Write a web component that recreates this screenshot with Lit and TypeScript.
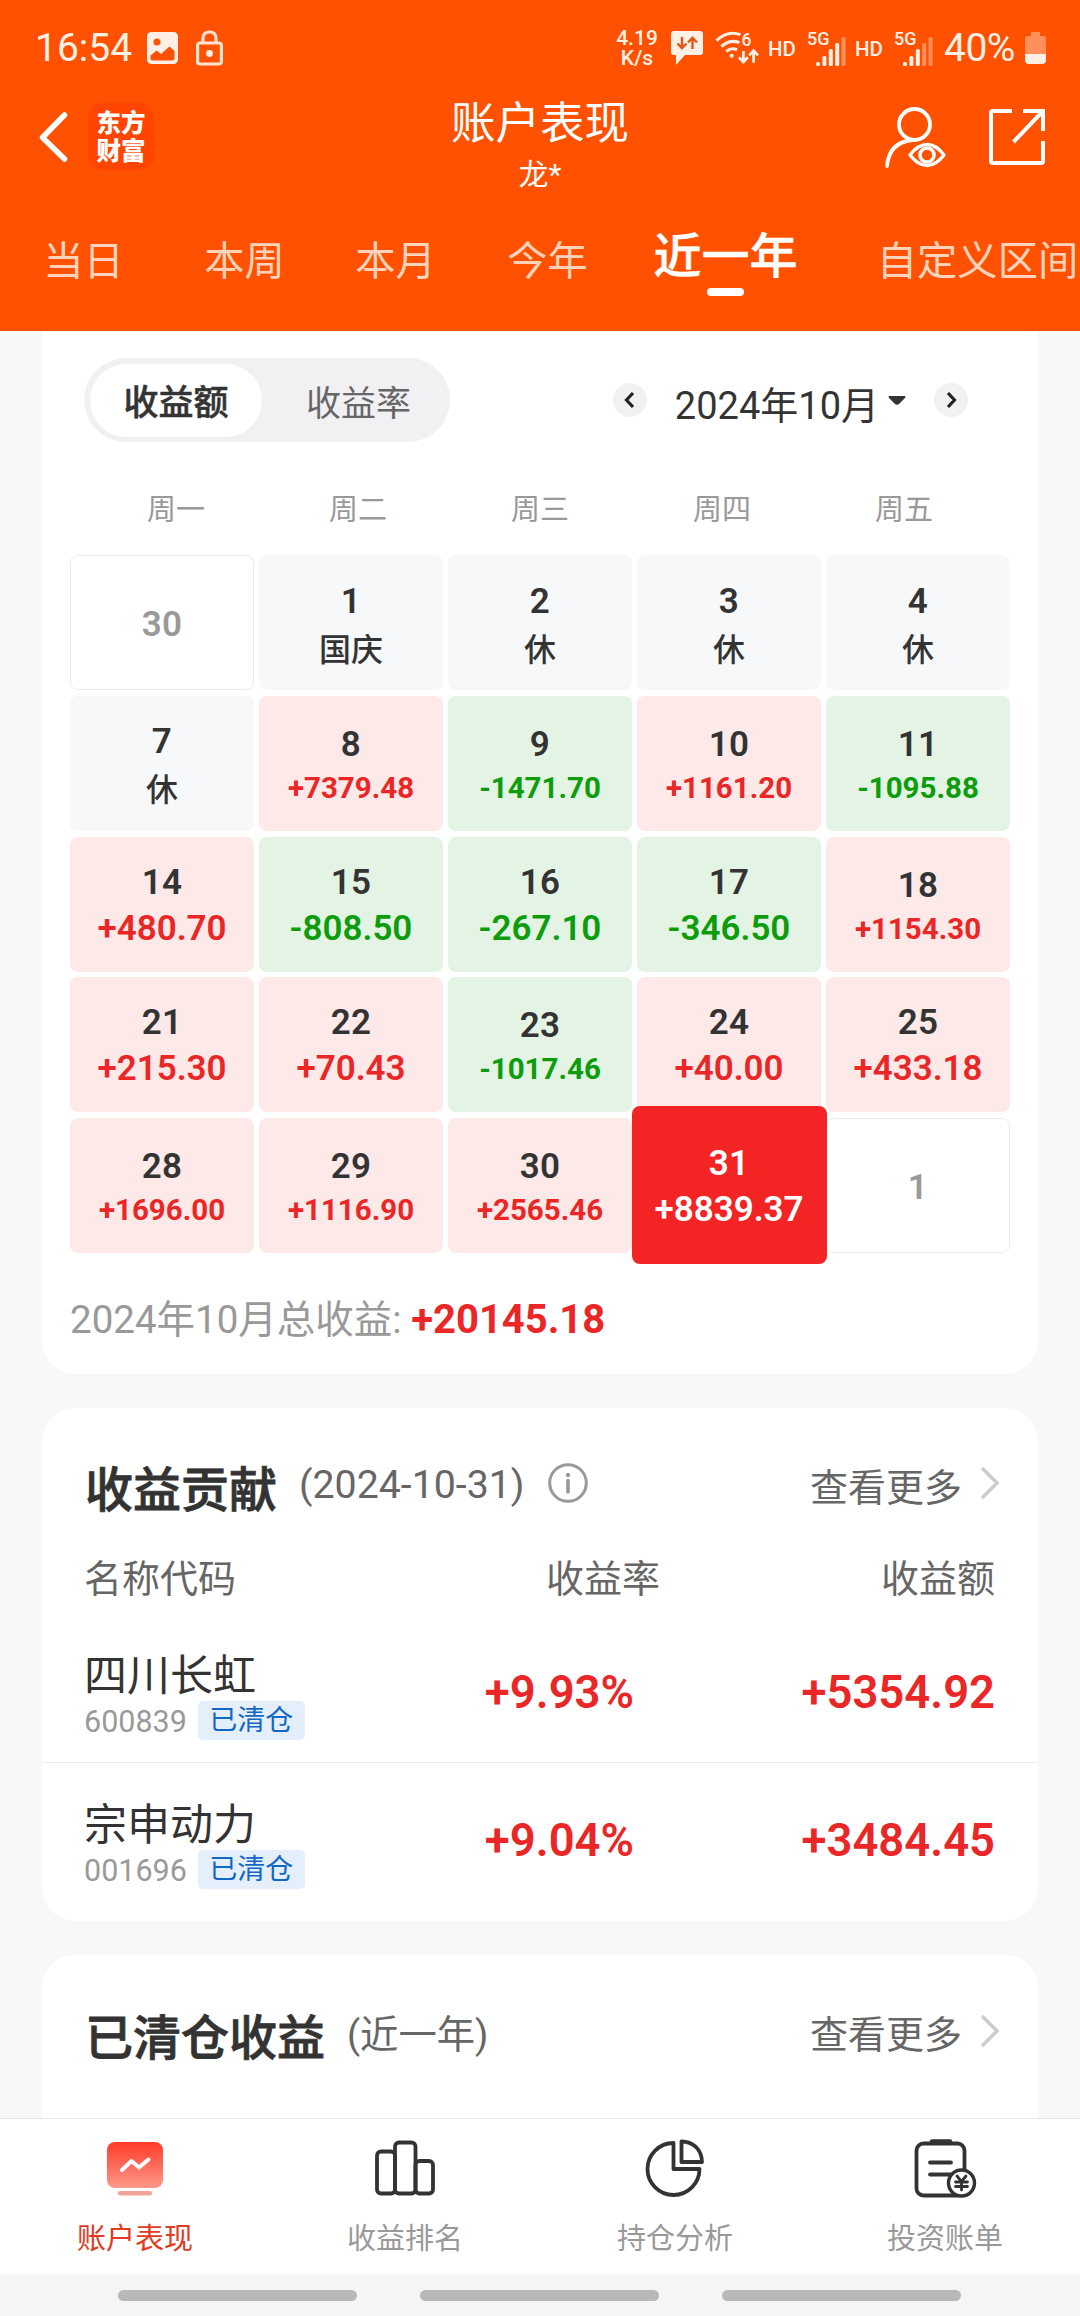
import { LitElement, html, css, svg, nothing } from "lit";
import { customElement } from "lit/decorators.js";
import { classMap } from "lit/directives/class-map.js";

type Kind = "outside" | "rest" | "up" | "down" | "selected";
interface Day { d: string; v?: string; k: Kind }

const day = (d: string, v?: string): Day => {
  if (!v) return { d, k: "outside" };
  if (v.startsWith("+")) return { d, v, k: "up" };
  if (v.startsWith("-")) return { d, v, k: "down" };
  return { d, v, k: "rest" };
};

const DAYS: Day[] = [
  day("30"), day("1", "国庆"), day("2", "休"), day("3", "休"), day("4", "休"),
  day("7", "休"), day("8", "+7379.48"), day("9", "-1471.70"), day("10", "+1161.20"), day("11", "-1095.88"),
  day("14", "+480.70"), day("15", "-808.50"), day("16", "-267.10"), day("17", "-346.50"), day("18", "+1154.30"),
  day("21", "+215.30"), day("22", "+70.43"), day("23", "-1017.46"), day("24", "+40.00"), day("25", "+433.18"),
  day("28", "+1696.00"), day("29", "+1116.90"), day("30", "+2565.46"),
  { d: "31", v: "+8839.37", k: "selected" }, day("1"),
];

const STOCKS = [
  { name: "四川长虹", code: "600839", rate: "+9.93%", amount: "+5354.92" },
  { name: "宗申动力", code: "001696", rate: "+9.04%", amount: "+3484.45" },
];

const bars = (lit: number) => svg`
  ${[0, 1, 2, 3, 4].map((i) => {
    const h = [4, 10, 17, 23, 29][i];
    return svg`<rect x=${i * 6.4} y=${30 - h} width="4" height=${h} rx="1.6" opacity=${i < lit ? 1 : 0.4} />`;
  })}`;

@customElement("app-root")
export class AppRoot extends LitElement {
  static styles = css`
    :host {
      display: flex;
      flex-direction: column;
      width: 1080px;
      height: 2316px;
      overflow: hidden;
      background: #f7f8fa;
      color: #333;
      font-family: Roboto, "Noto Sans CJK SC", sans-serif;
    }
    * { box-sizing: border-box; }
    svg { display: block; flex: none; overflow: visible; }
    .header { flex: none; height: 331px; background: #ff5100; color: #fff; }
    .status {
      height: 96px;
      padding: 0 34px 0 35px;
      display: flex;
      align-items: center;
      color: #fff0e6;
      fill: #fff0e6;
    }
    .clock { font-size: 39px; width: 112px; line-height: 96px; }
    .lock { margin-left: 18px; }
    .fill { flex: 1; }
    .speed { font-size: 21px; line-height: 20.5px; font-weight: 500; text-align: center; width: 44px; margin-right: 12px; }
    .wifi { margin-left: 12px; }
    .hd { font-size: 20.5px; font-weight: 500; margin-left: 9px; width: 30px; padding-top: 2px; }
    .sig { margin-left: 9px; }
    .sig text, .wifi text { font-weight: 500; font-size: 18px; }
    .pct { font-size: 39px; margin-left: 11px; width: 81px; letter-spacing: -0.5px; white-space: nowrap; }

    .nav { height: 108px; display: grid; grid-template-columns: 300px 1fr 300px; }
    .nav-left { display: flex; padding: 7px 0 0 37px; }
    .back { margin-top: 8px; }
    .logo {
      margin-left: 19px;
      width: 66px;
      height: 67px;
      border-radius: 15px;
      background: #ff4500;
      padding: 5px 0 0 8.5px;
      font-family: "Noto Sans CJK SC", sans-serif;
      font-weight: 900;
      font-size: 24.5px;
      line-height: 28px;
    }
    .titles { text-align: center; padding-top: 2px; }
    .title { font-size: 44.5px; line-height: 52px; }
    .sub { font-size: 30px; line-height: 40px; margin-top: 5px; }
    .nav-right { display: flex; justify-content: flex-end; gap: 42px; padding: 10px 34px 0 0; }

    .tabs { height: 127px; display: grid; grid-template-columns: 167px 155px 147px 157px 199px 305px; }
    .tab { text-align: center; font-size: 40.3px; line-height: 116px; color: #ffd3bb; white-space: nowrap; }
    .tab.on {
      color: #fff;
      font-size: 48px;
      font-weight: 500;
      line-height: 84px;
      padding-top: 11px;
      display: flex;
      flex-direction: column;
      align-items: center;
      -webkit-text-stroke: 0.5px #fff;
    }
    .tab.on::after { content: ""; width: 37px; height: 8px; border-radius: 4px; background: #fff; margin-top: -11px; }

    .body { flex: 1; min-height: 0; overflow: hidden; padding: 0 42px; display: flex; flex-direction: column; gap: 34px; }
    .card { background: #fff; border-radius: 33px; flex: none; }
    .calendar { height: 1043px; border-radius: 0 0 33px 33px; padding: 27px 28px 0; }
    .tools { display: flex; align-items: center; height: 84px; padding: 0 42px 0 14px; }
    .seg { width: 366px; height: 84px; border-radius: 42px; background: #f1f1f4; padding: 6px; display: flex; font-size: 35px; }
    .seg-item { flex: 1; text-align: center; line-height: 82px; color: #666; padding-left: 11px; }
    .seg-item.on { flex: none; width: 172px; height: 73px; padding-left: 0; line-height: 80px; border-radius: 37px; background: #fff; color: #333; font-weight: 500; -webkit-text-stroke: 0.5px #333; }
    .month { display: flex; align-items: center; margin-left: auto; }
    .round { width: 34px; height: 34px; border-radius: 50%; background: #f1f1f4; display: grid; place-content: center; }
    .month-name { font-size: 38px; line-height: 50px; margin: 11px 9px 0 28px; white-space: nowrap; }
    .caret { margin-right: 28px; }

    .week { display: grid; grid-template-columns: repeat(5, 182px); justify-content: center; height: 58px; margin-top: 38px; font-size: 29px; line-height: 61px; color: #999; text-align: center; }
    .grid { margin-top: 17px; display: grid; grid-template-columns: repeat(5, 184px); grid-auto-rows: 135px; column-gap: 5px; row-gap: 5.75px; }
    .cell {
      border-radius: 8px;
      display: flex;
      flex-direction: column;
      align-items: center;
      justify-content: center;
      padding-top: 3px;
      font-size: 35px;
      font-weight: 600;
      white-space: nowrap;
    }
    .num { line-height: 46px; letter-spacing: 0.3px; }
    .val { line-height: 46px; }
    .outside { border: 1px solid #ececee; color: #999; }
    .outside .num { margin-top: 2px; }
    .rest { background: #f7f8fa; padding-top: 11px; }
    .rest .num { line-height: 44px; }
    .rest .val { font-size: 32px; font-weight: 500; line-height: 53px; }
    .up { background: #fde9e8; }
    .down { background: #e3f4e4; }
    .up .val { color: #ea2626; }
    .down .val { color: #0c9c0c; }
    .long { padding-top: 1px; }
    .long .num { line-height: 45px; margin-top: 3px; }
    .long .val { font-size: 29.5px; line-height: 42px; font-weight: 700; }
    .selected { background: #f42424; color: #fff; border-radius: 8px; margin: -12px -5.5px -11px; z-index: 1; }

    .total { margin-top: 40px; font-size: 38.5px; line-height: 54px; color: #999; white-space: nowrap; }
    .total b { color: #ea2626; font-weight: 700; font-size: 40px; }

    .head { display: flex; align-items: center; padding: 0 38px 0 43px; }
    .h { font-size: 48px; font-weight: 500; line-height: 70px; -webkit-text-stroke: 0.8px #333; }
    .note { font-size: 38.3px; line-height: 50px; color: #666; margin-left: 22px; }
    .more { font-size: 38px; line-height: 50px; color: #666; margin-left: auto; margin-right: 18px; }
    .info { margin-left: 23px; margin-top: -11px; }
    .go { margin-top: -11px; }
    .contrib { height: 513px; }
    .contrib .head { padding-top: 45px; height: 115px; }
    .contrib .h { margin-top: 5px; }
    .contrib .note { margin-top: -7px; font-size: 39.3px; }
    .contrib .more { margin-top: 0; }
    .cols { display: grid; grid-template-columns: 400px 176px 1fr; padding: 0 43px 0 42px; font-size: 38px; line-height: 54px; height: 54px; margin-top: 29px; color: #666; }
    .cols div + div { text-align: right; }
    .row { display: grid; grid-template-columns: 350px 200px 1fr; padding: 0 43px 0 42px; height: 148px; align-items: center; }
    .rows { margin-top: 8px; }
    .row + .row { border-top: 1px solid #ececec; }
    .stock { padding-top: 16px; }
    .name { font-size: 43px; line-height: 50px; }
    .code { display: flex; align-items: center; gap: 11px; font-size: 30.5px; line-height: 38px; color: #999; margin-top: -1px; }
    .code-num { padding-top: 3px; }
    .tag { background: #e4effb; color: #1268c3; border-radius: 5px; font-size: 28px; width: 107px; height: 39px; line-height: 39px; text-align: center; }
    .num-red { font-size: 45.4px; font-weight: 600; color: #ea2626; text-align: right; padding-top: 8px; }
    .closed { height: 300px; }
    .closed .head { padding-top: 36px; height: 122px; }
    .closed .h { margin-top: 9px; }
    .closed .note, .closed .more { margin-top: 2px; }
    .closed .go { margin-top: -7px; }

    .bottom { flex: none; height: 156px; background: #fff; border-top: 1px solid #e8e8ea; display: grid; grid-template-columns: repeat(4, 270px); }
    .item { display: flex; flex-direction: column; align-items: center; padding-top: 16px; font-size: 29px; line-height: 40px; color: #999; gap: 18px; }
    .item.on { color: #e23b22; }
    .gesture { flex: none; height: 42px; background: #f5f5f5; display: flex; padding-left: 118px; gap: 63px; padding-top: 16px; }
    .pill { width: 239px; height: 11px; border-radius: 5.5px; background: #b8b8b8; }
  `;

  private status() {
    return html`<div class="status">
      <div class="clock">16:54</div>
      <svg width="31" height="32" viewBox="0 0 31 32"><path fill-rule="evenodd" d="M5 0H26Q31 0 31 5V27Q31 32 26 32H5Q0 32 0 27V5Q0 0 5 0ZM3.500 23.500V26Q3.500 28.500 6 28.500H25Q27.500 28.500 27.500 26V19L22.500 14.500L14 22L9.500 18.500ZM10 6.500A3.500 3.500 0 1 0 10 13.500A3.500 3.500 0 1 0 10 6.500Z"/></svg>
      <svg class="lock" width="27" height="36" viewBox="0 0 27 36"><g fill="none" stroke="#ffe2cf" stroke-width="3.200"><rect x="1.600" y="13" width="23.800" height="21" rx="2.500"/><path d="M7 13V8.500Q7 2 13.500 2Q20 2 20 8.500V13"/></g><circle cx="13.500" cy="23.500" r="3.400"/></svg>
      <div class="fill"></div>
      <div class="speed">4.19<br />K/s</div>
      <svg width="32" height="34" viewBox="0 0 32 34"><path d="M3 0H29Q32 0 32 3V21Q32 24 29 24H14L5 34V24H3Q0 24 0 21V3Q0 0 3 0Z"/><path d="M11 6V17M6.500 12.500L11 17.200L15.500 12.500M21.500 18V7M17 11.500L21.500 6.800L26 11.500" fill="none" stroke="#e2571a" stroke-width="2.400"/></svg>
      <svg class="wifi" width="44" height="34" viewBox="0 0 45 34"><g fill="none" stroke="#fff0e6" stroke-width="3.200"><path d="M1.500 9.500Q13 -1.500 26 3.500"/><path d="M6.500 15.500Q15 7.500 25 11.500"/><path d="M11.500 20.500Q17 16 22.500 19"/><path d="M29 20V31M24.500 26.500L29 31.500L33.500 26.500M39.500 32V20M35 24.500L39.500 19.500L44 24.500" stroke-width="2.800"/></g><circle cx="17" cy="25" r="2.200"/><text x="27" y="14.500">6</text></svg>
      <div class="hd">HD</div>
      <svg class="sig" width="39" height="36" viewBox="0 0 39 36"><text x="0" y="15">5G</text><g transform="translate(9 6)">${bars(4)}</g></svg>
      <div class="hd">HD</div>
      <svg class="sig" width="39" height="36" viewBox="0 0 39 36"><text x="0" y="15">5G</text><g transform="translate(9 6)">${bars(3)}</g></svg>
      <div class="pct">40%</div>
      <svg width="21" height="32" viewBox="0 0 21 32"><path opacity="0.4" d="M6 0H15V4H18Q21 4 21 7V22H0V7Q0 4 3 4H6Z"/><path d="M0 22H21V28Q21 32 17 32H4Q0 32 0 28Z"/></svg>
    </div>`;
  }

  private nav() {
    return html`<div class="nav">
      <div class="nav-left">
        <svg class="back" width="32" height="52" viewBox="0 0 32 52"><path d="M27.500 4L5.500 26.500L27.500 48" fill="none" stroke="#fff" stroke-width="5.500" stroke-linecap="round" stroke-linejoin="round"/></svg>
        <div class="logo">东方<br />财富</div>
      </div>
      <div class="titles"><div class="title">账户表现</div><div class="sub">龙*</div></div>
      <div class="nav-right">
        <svg width="64" height="64" viewBox="0 0 64 64" fill="none" stroke="#fff" stroke-width="3.800" stroke-linecap="round"><circle cx="32.500" cy="18.500" r="15.500"/><path d="M5 60Q7 36 31 34"/><path d="M28 49Q36 38.500 45 38.500Q54 38.500 62 49Q54 59.500 45 59.500Q36 59.500 28 49Z" stroke-width="3.400" stroke-linejoin="round"/><circle cx="45" cy="49" r="7" stroke-width="3.600"/></svg>
        <svg width="58" height="58" viewBox="0 0 58 58" fill="none" stroke="#fff" stroke-width="4"><path d="M24 5H5Q3 5 3 7V55Q3 57 5 57H53Q55 57 55 55V35"/><path d="M35 5H55V25M25.500 36L54 6"/></svg>
      </div>
    </div>`;
  }

  private cell(c: Day) {
    const cls = { cell: true, [c.k]: true, long: (c.v?.length ?? 0) > 7 && c.k !== "selected" };
    return html`<div class=${classMap(cls)}><span class="num">${c.d}</span>${c.v ? html`<span class="val">${c.v}</span>` : nothing}</div>`;
  }

  private go() {
    return html`<svg class="go" width="20" height="34" viewBox="0 0 20 34"><path d="M2 2L17 17L2 32" fill="none" stroke="#ccc" stroke-width="3.400"/></svg>`;
  }

  private calendar() {
    return html`<section class="card calendar">
      <div class="tools">
        <div class="seg"><div class="seg-item on">收益额</div><div class="seg-item">收益率</div></div>
        <div class="month">
          <div class="round"><svg width="12" height="18" viewBox="0 0 12 18"><path d="M9 2L2.500 9L9 16" fill="none" stroke="#222" stroke-width="3.200"/></svg></div>
          <div class="month-name">2024年10月</div>
          <svg class="caret" width="18" height="9" viewBox="0 0 18 9"><path d="M1 0H17Q18 1 17 2L11 8Q9 9.500 7 8L1 2Q0 1 1 0Z" fill="#333"/></svg>
          <div class="round"><svg width="12" height="18" viewBox="0 0 12 18"><path d="M3 2L9.500 9L3 16" fill="none" stroke="#222" stroke-width="3.200"/></svg></div>
        </div>
      </div>
      <div class="week">${["周一", "周二", "周三", "周四", "周五"].map((w) => html`<div>${w}</div>`)}</div>
      <div class="grid">${DAYS.map((c) => this.cell(c))}</div>
      <div class="total">2024年10月总收益: <b>+20145.18</b></div>
    </section>`;
  }

  private contrib() {
    return html`<section class="card contrib">
      <div class="head">
        <div class="h">收益贡献</div><div class="note">(2024-10-31)</div>
        <svg class="info" width="40" height="40" viewBox="0 0 40 40"><circle cx="20" cy="20" r="18.300" fill="none" stroke="#999" stroke-width="3"/><circle cx="20" cy="12" r="2.200" fill="#999"/><path d="M20 17.500V29" stroke="#999" stroke-width="3.600" stroke-linecap="round"/></svg>
        <div class="more">查看更多</div>${this.go()}
      </div>
      <div class="cols"><div>名称代码</div><div>收益率</div><div>收益额</div></div>
      <div class="rows">${STOCKS.map((s) => html`<div class="row">
        <div class="stock"><div class="name">${s.name}</div><div class="code"><span class="code-num">${s.code}</span><span class="tag">已清仓</span></div></div>
        <div class="num-red">${s.rate}</div><div class="num-red">${s.amount}</div>
      </div>`)}</div>
    </section>`;
  }

  private bottom() {
    const s = "#333";
    return html`<div class="bottom">
      <div class="item on">
        <svg width="66" height="66" viewBox="0 0 66 66"><defs><linearGradient id="g" x1="0" y1="0" x2="0" y2="1"><stop offset="0" stop-color="#ff3a26"/><stop offset="1" stop-color="#ff9a8c"/></linearGradient></defs><rect x="5" y="7" width="56" height="46" rx="8" fill="url(#g)"/><path d="M20 35L29.500 26L37 32.500L46.500 24.500" fill="none" stroke="#fff" stroke-width="4" stroke-linecap="round" stroke-linejoin="round"/><rect x="16" y="56" width="34" height="4.500" rx="2" fill="#f3a498"/></svg>
        <span>账户表现</span>
      </div>
      <div class="item">
        <svg width="66" height="66" viewBox="0 0 66 66" fill="none" stroke=${s} stroke-width="3.800"><rect x="5" y="16.500" width="18" height="42" rx="4"/><rect x="23" y="7.500" width="20.500" height="51" rx="4"/><rect x="43.500" y="26" width="17.500" height="32.500" rx="4"/></svg>
        <span>收益排名</span>
      </div>
      <div class="item">
        <svg width="66" height="66" viewBox="0 0 66 66" fill="none" stroke=${s} stroke-width="3.800" stroke-linejoin="round"><path d="M31.500 8A26 26 0 1 0 57.500 34H31.500Z"/><path d="M39.500 6.500V27H60Q60 18 54 12Q48 6.500 39.500 6.500Z"/></svg>
        <span>持仓分析</span>
      </div>
      <div class="item">
        <svg width="66" height="66" viewBox="0 0 66 66" fill="none" stroke=${s} stroke-width="3.800" stroke-linecap="round"><rect x="4.500" y="8.500" width="48" height="52" rx="7"/><path d="M20 6.500H38" stroke-width="4.500"/><path d="M18 27.500H39M18 39.500H39"/><circle cx="49.500" cy="48" r="13" fill="#fff" stroke-width="3.400"/><path d="M45 41L49.500 46.500L54 41M43.500 47H55.500M43.500 51.500H55.500M49.500 47V55" stroke-width="2.800"/></svg>
        <span>投资账单</span>
      </div>
    </div>`;
  }

  render() {
    return html`
      <header class="header">
        ${this.status()}${this.nav()}
        <div class="tabs">${["当日", "本周", "本月", "今年", "近一年", "自定义区间"].map((t) => html`<div class=${classMap({ tab: true, on: t === "近一年" })}>${t}</div>`)}</div>
      </header>
      <main class="body">
        ${this.calendar()}${this.contrib()}
        <section class="card closed">
          <div class="head"><div class="h">已清仓收益</div><div class="note">(近一年)</div><div class="more">查看更多</div>${this.go()}</div>
        </section>
      </main>
      ${this.bottom()}
      <div class="gesture"><div class="pill"></div><div class="pill"></div><div class="pill"></div></div>
    `;
  }
}
